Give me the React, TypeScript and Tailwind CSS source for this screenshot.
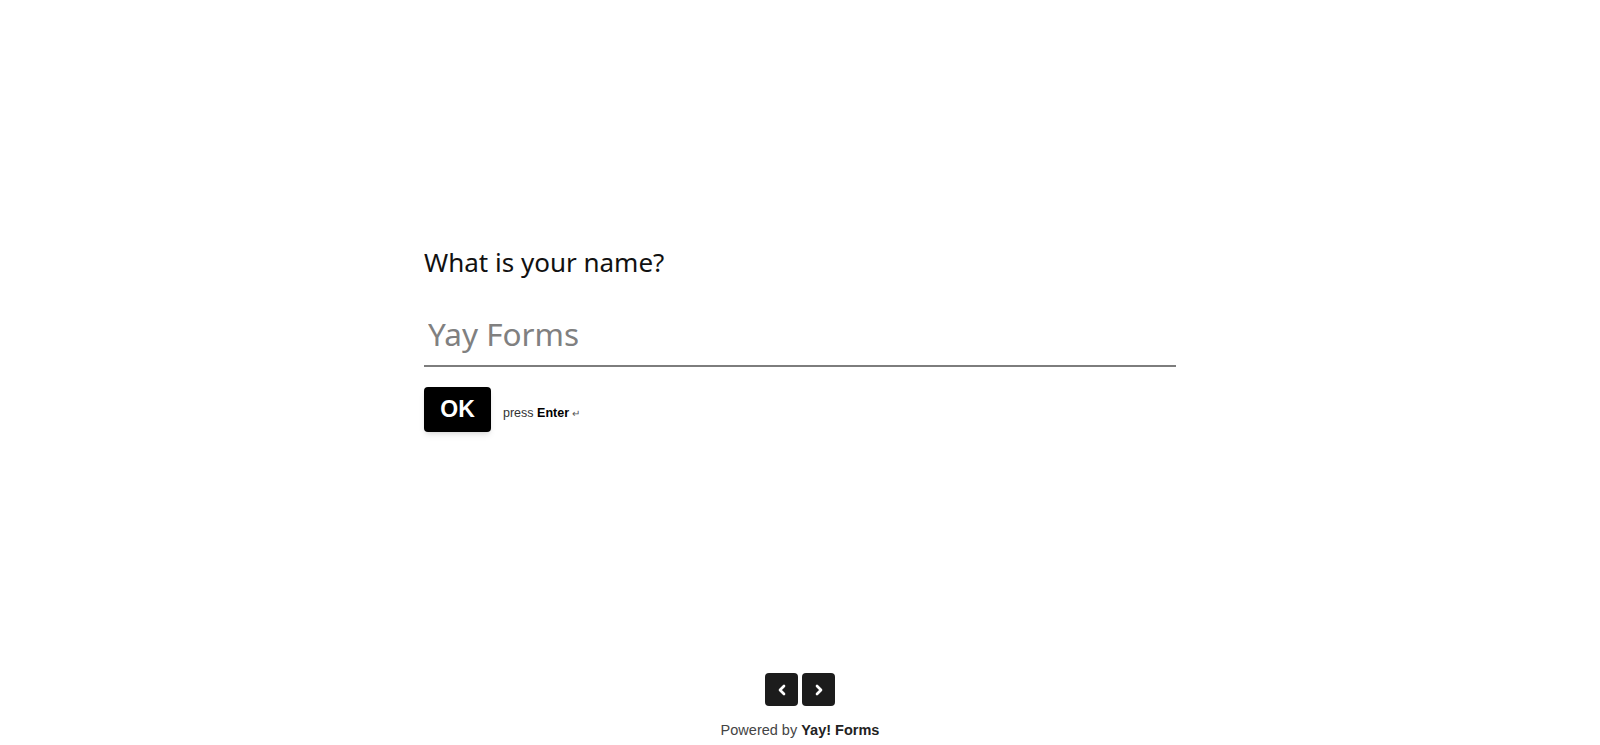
import { ChevronLeft, ChevronRight } from 'lucide-react';

const App = () => {
  return (
    <div className="h-[745px] flex flex-col bg-white" style={{ fontFamily: '"Noto Sans", sans-serif' }}>
      {/* Question */}
      <div className="flex-1 flex justify-center pt-[246px]">
        <div className="w-[752px]">
          <h1 className="text-[26px] leading-8 text-[#111]">What is your name?</h1>
          <div className="mt-[34px] border-b-2 border-[#7d7d7d]">
            <input
              type="text"
              placeholder="Yay Forms"
              className="w-full px-1 pb-[9px] text-[31.5px] leading-[44px] text-[#111] placeholder:text-[#808080] outline-none bg-transparent"
            />
          </div>
          <div className="mt-5 flex items-center gap-3">
            <button className="w-[67px] h-[45px] bg-black text-white rounded-[4px] shadow-md text-[23px] font-bold" style={{ fontFamily: '"Liberation Sans", sans-serif' }}>
              OK
            </button>
            <span className="text-[12.5px] text-[#333] mt-2" style={{ fontFamily: '"Liberation Sans", sans-serif' }}>
              press <b className="text-black">Enter</b> <span className="text-[10px] text-[#555]">↵</span>
            </span>
          </div>
        </div>
      </div>

      {/* Footer */}
      <div className="flex flex-col items-center pb-[3px]" style={{ fontFamily: '"Liberation Sans", sans-serif' }}>
        <div className="flex gap-1">
          <button className="w-[33px] h-[33px] rounded-[4px] bg-[#1c1c1c] flex items-center justify-center">
            <ChevronLeft className="w-4 h-4 text-white" strokeWidth={4} />
          </button>
          <button className="w-[33px] h-[33px] rounded-[4px] bg-[#1c1c1c] flex items-center justify-center">
            <ChevronRight className="w-4 h-4 text-white" strokeWidth={4} />
          </button>
        </div>
        <p className="mt-[14px] text-[14.5px] text-[#444]">
          Powered by <span className="font-bold text-[#222]">Yay! Forms</span>
        </p>
      </div>
    </div>
  );
};

export default App;
